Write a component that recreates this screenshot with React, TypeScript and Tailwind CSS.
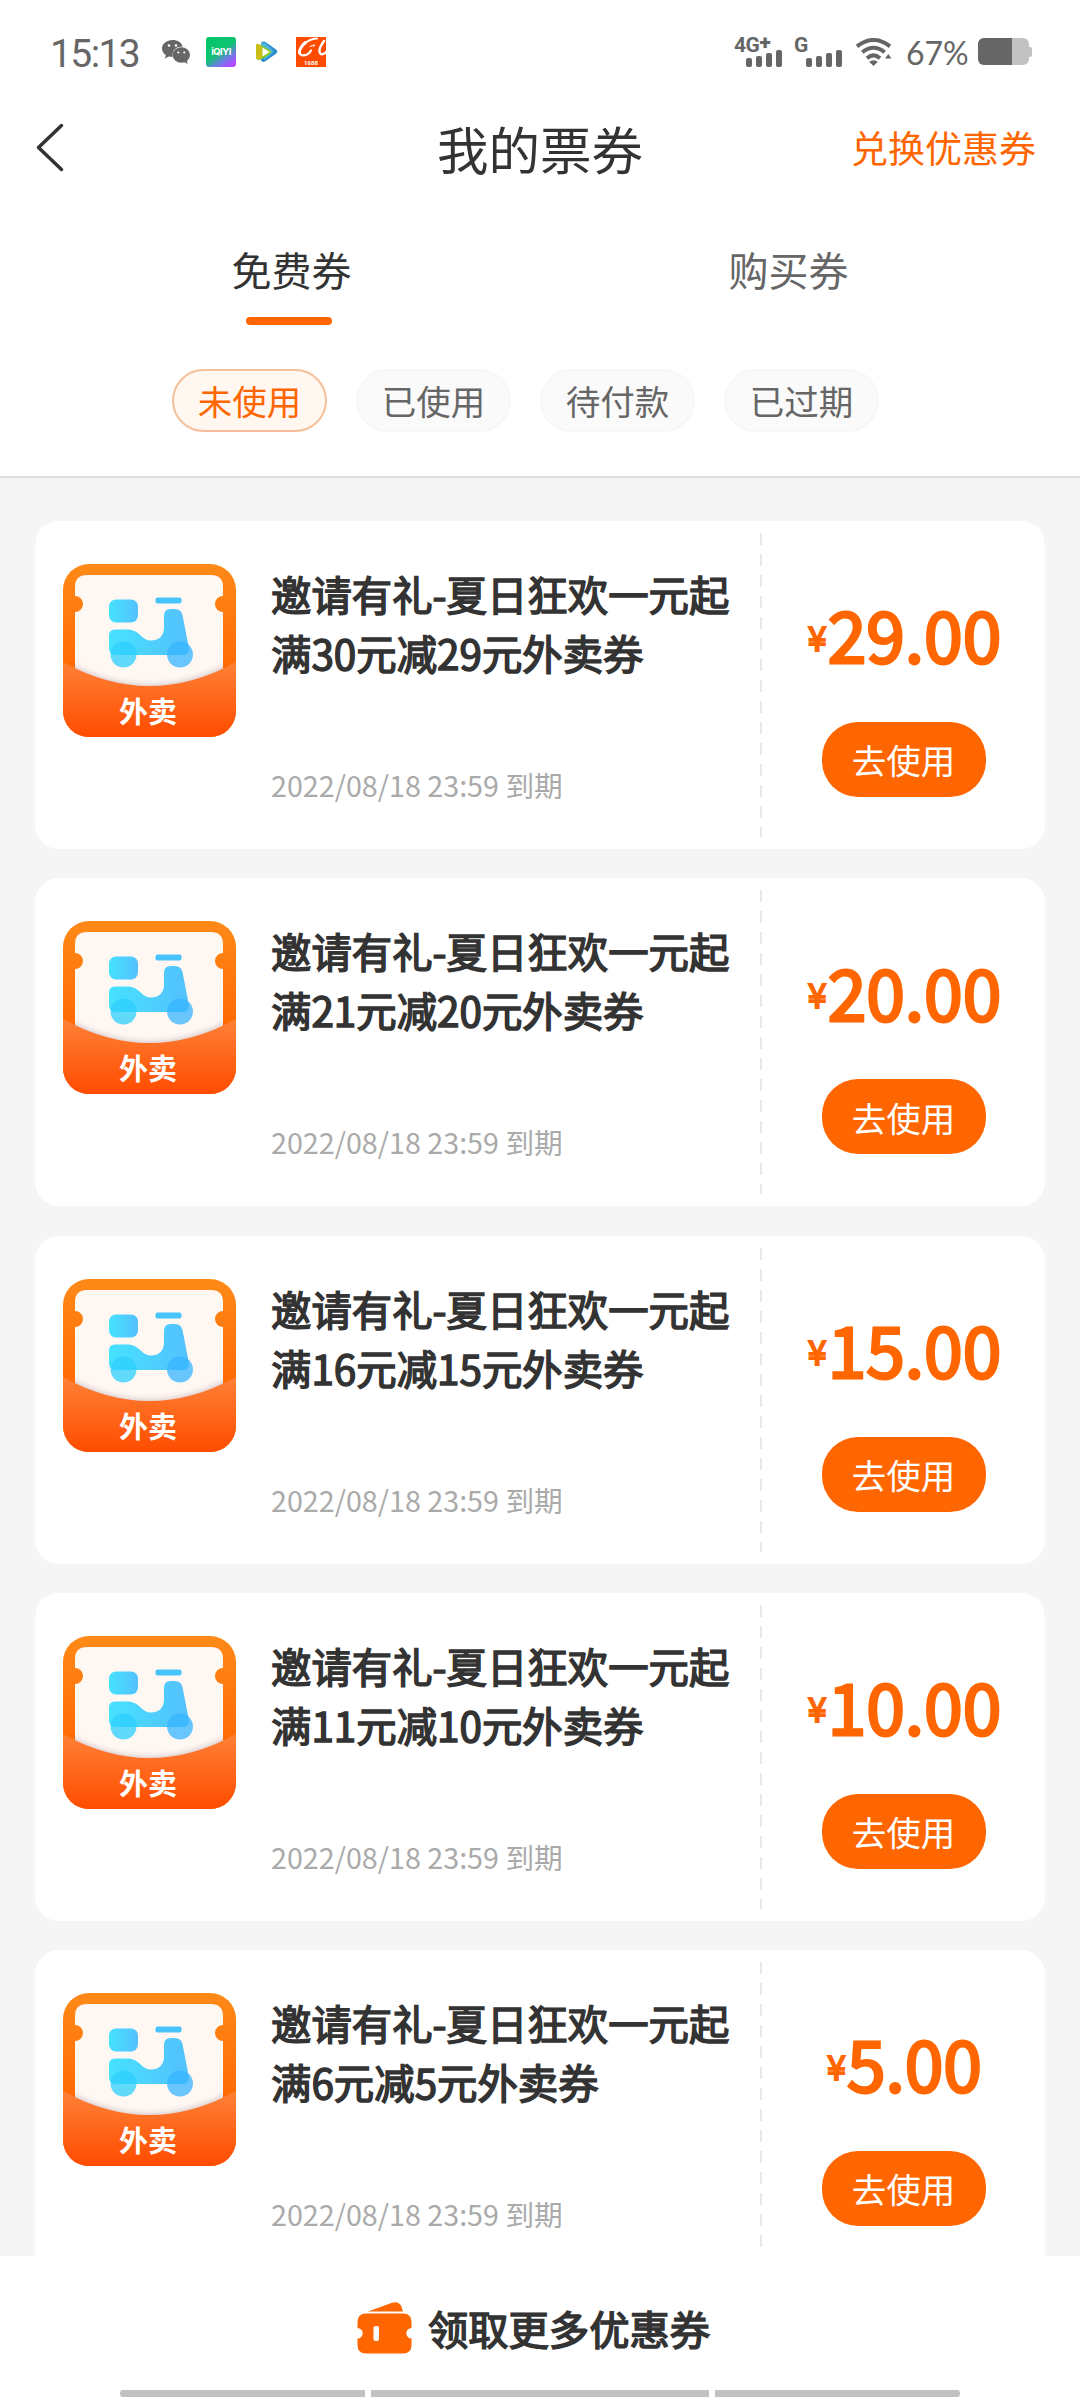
import { useState } from 'react'
import { clsx } from 'clsx'

type Coupon = {
  id: number
  full: number
  minus: number
}

const coupons: Coupon[] = [
  { id: 1, full: 30, minus: 29 },
  { id: 2, full: 21, minus: 20 },
  { id: 3, full: 16, minus: 15 },
  { id: 4, full: 11, minus: 10 },
  { id: 5, full: 6, minus: 5 },
]

const filters = ['未使用', '已使用', '待付款', '已过期']

function WeChatIcon() {
  return (
    <svg width="28" height="26" viewBox="0 0 28 26" fill="#666">
      <path d="M10.500 1C4.700 1 0 4.800 0 9.600c0 2.700 1.500 5 3.800 6.600L2.900 19.500l3.900-2c1.200.3 2.400.5 3.700.5C10 10.500 15 7.500 20.800 7.600 19.800 3.700 15.600 1 10.500 1Z" />
      <ellipse cx="19.300" cy="16" rx="8.700" ry="7.700" />
      <path d="m21.500 22.500 4 2.500-.8-4Z" />
      <g fill="#fff">
        <circle cx="7" cy="6.500" r="1.300" />
        <circle cx="14" cy="6.500" r="1.300" />
        <circle cx="16.300" cy="13.500" r="1.100" />
        <circle cx="22.300" cy="13.500" r="1.100" />
      </g>
    </svg>
  )
}

function VideoIcon() {
  return (
    <svg width="22" height="22" viewBox="0 0 22 22">
      <path d="M5 2Q6 0 9 .8L20 8.500q2.500 2 0 4.200L9 20.500q-2.500 1.200-4-1Z" fill="#2b8fd0" />
      <path d="M5 2Q7 1 9 2l7 6.500q1.500 2 0 4L8 19Z" fill="#4fb8d9" />
      <path d="M0 5q0-3 3-1.800l11 6q2 1.800 0 3.600l-9 5.700Q0 20 0 16Z" fill="#8cc916" />
      <path d="M0 5q0-3 3-1.800l3 1.600v12.700Q0 20 0 16Z" fill="#f4b81d" opacity=".6" />
      <path d="M6.500 6.500 13.500 11l-7 4.500Z" fill="#fff" />
    </svg>
  )
}

function AlibabaIcon() {
  return (
    <svg width="30" height="30" viewBox="0 0 30 30">
      <path d="M0 0h30v30H0Z" fill="#ff4b00" />
      <g fill="none" stroke="#fff" strokeLinecap="round">
        <path d="M21 1.500C13 1.500 6 8 4 13c-1.500 5 2 6.500 7 4.500 2-1 3-2 4-4" strokeWidth="2.200" />
        <path d="M9 5.500C5 9.500 3 13 3.500 16" strokeWidth="2.800" />
        <path d="M14 9.500q3-1.500 5-1.500l-2 1.500" strokeWidth="1" />
        <path d="M28 4c-3 4-5.500 9-4 12 1 2.500 4 1 6-1" strokeWidth="2.400" />
      </g>
      <text x="15" y="27.500" textAnchor="middle" fontSize="6" fontWeight="700" fill="#fff" fontFamily="Roboto, sans-serif">1688</text>
    </svg>
  )
}

function SignalBars({ label }: { label: string }) {
  return (
    <div className="relative h-[30px]">
      <span className="absolute left-0 top-0 font-[Roboto,sans-serif] text-[21px] font-bold leading-[16px] tracking-[-0.5px]">
        {label.replace('+', '')}
        {label.endsWith('+') && <b className="relative -top-[3px]">+</b>}
      </span>
      <div className="flex h-full items-end gap-[4px] pl-[12px]">
        <i className="h-[9px] w-[6px] rounded-[2px] bg-[#666]" />
        <i className="h-[11px] w-[6px] rounded-[2px] bg-[#666]" />
        <i className="h-[14px] w-[6px] rounded-[2px] bg-[#666]" />
        <i className="h-[17px] w-[6px] rounded-[2px] bg-[#666]" />
      </div>
    </div>
  )
}

function StatusBar() {
  return (
    <div className="flex h-[103px] items-center justify-between pl-[50px] pr-[48px] text-[#666]">
      <div className="flex items-center">
        <span className="w-[112px] pt-[5px] font-[Roboto,sans-serif] text-[39px] leading-none tracking-[-1.6px]">15:13</span>
        <WeChatIcon />
        <div className="ml-4 flex h-[30px] w-[30px] items-center justify-center rounded-[3px] bg-[linear-gradient(145deg,#00c566_0%,#0fc472_48%,#6a7fe0_70%,#b04cff_88%)] font-[Inter,sans-serif] text-[9.500px] font-bold leading-none tracking-[-0.5px] text-white">
          iQIYI
        </div>
        <div className="ml-5">
          <VideoIcon />
        </div>
        <div className="ml-[18px]">
          <AlibabaIcon />
        </div>
      </div>
      <div className="flex items-center">
        <SignalBars label="4G+" />
        <div className="ml-[12px]">
          <SignalBars label="G" />
        </div>
        <svg className="ml-[14px]" width="36" height="28" viewBox="0 0 36 28" fill="none" stroke="#666" strokeWidth="4">
          <path d="M1 8.300Q17.500-4.300 34 8.300" />
          <path d="M6.300 14.300q11.200-9 22.400 0" />
          <path d="M11 20.200q6.500-5.600 13 0" />
          <path d="M17.500 28l-4.300-4.200q4.300-3 8.600 0Z" fill="#666" stroke="none" />
          <path d="M29 20.500l3.300-4.500 3.200 4.500Z" fill="#666" stroke="none" />
        </svg>
        <span className="ml-[14px] w-[72px] pt-[2px] font-[Lato,sans-serif] text-[32px] leading-none">67%</span>
        <div className="flex items-center">
          <div className="flex h-[27px] w-[51px] overflow-hidden rounded-[6px] bg-[#c2c2c2]">
            <div className="w-[34px] bg-[#666]" />
          </div>
          <div className="h-[10px] w-[3px] rounded-r-[2px] bg-[#c2c2c2]" />
        </div>
      </div>
    </div>
  )
}

function TakeoutIcon() {
  return (
    <svg className="shrink-0" width="173" height="173" viewBox="0 0 173 173">
      <defs>
        <linearGradient id="back" x1="0" y1="0" x2="0" y2="1">
          <stop offset="0" stopColor="#ff8a17" />
          <stop offset=".6" stopColor="#ff6a05" />
        </linearGradient>
        <linearGradient id="pocket" x1="0" y1="0" x2="0" y2="1">
          <stop offset="0" stopColor="#ff8136" />
          <stop offset="1" stopColor="#ff4c00" />
        </linearGradient>
        <linearGradient id="bike" x1="0" y1="0" x2="1" y2="0">
          <stop offset="0" stopColor="#46e2ff" />
          <stop offset="1" stopColor="#54c0fd" />
        </linearGradient>
        <clipPath id="tile">
          <rect width="173" height="173" rx="26" />
        </clipPath>
        <filter id="soft" x="-10%" y="-10%" width="120%" height="120%">
          <feGaussianBlur stdDeviation="3" />
        </filter>
        <clipPath id="ticket">
          <path d="M24 11H148Q160 11 160 23V32a8 8 0 0 0 0 16V130H12V48a8 8 0 0 0 0-16V23Q12 11 24 11Z" />
        </clipPath>
      </defs>
      <g clipPath="url(#tile)">
        <path d="M0 0H173V173H0Z" fill="url(#back)" />
        <g clipPath="url(#ticket)">
          <path d="M0 0H173V173H0Z" fill="#fff7f2" />
          <path d="M0 97Q86.500 146 173 97V173H0Z" fill="#a08a98" opacity=".55" filter="url(#soft)" />
        </g>
        <path d="M0 98Q86.500 146 173 98V173H0Z" fill="url(#pocket)" />
      </g>
      <rect x="46" y="35.500" width="29" height="23" rx="7" fill="url(#bike)" />
      <rect x="92.500" y="33.500" width="26" height="6" rx="2" fill="#48c4fd" />
      <path d="M52 65.500H64C77 65.500 78 76.500 88 76.500 97 76.500 101 71 101 63V52Q101 45 107.500 45H112Q118 45 119.500 51L125.500 82Q127 91 120 91H53Q46 91 46 84V71.500Q46 65.500 52 65.500Z" fill="url(#bike)" />
      <circle cx="60.500" cy="90.500" r="13" fill="#2ccffd" opacity=".75" />
      <circle cx="117" cy="90.500" r="13" fill="#36b6ff" opacity=".75" />
      <text x="85" y="159" textAnchor="middle" fontSize="29" fontWeight="700" fill="#fff" fontFamily="'Noto Sans CJK SC', sans-serif">外卖</text>
    </svg>
  )
}

function CouponCard({ coupon }: { coupon: Coupon }) {
  return (
    <div className="flex h-[328px] shrink-0 rounded-[24px] bg-white">
      <div className="flex w-[725px] pl-[28px] pt-[43px]">
        <TakeoutIcon />
        <div className="ml-[35px] whitespace-nowrap">
          <h2 className="text-[40.400px] leading-[59px] text-[#333] [-webkit-text-stroke:1.500px_#333]">
            邀请有礼-夏日狂欢一元起
            <br />
            满{coupon.full}元减{coupon.minus}元外卖券
          </h2>
          <p className="mt-[83px] text-[28.700px] leading-[40px] text-[#aaa]">2022/08/18 23:59 到期</p>
        </div>
      </div>
      <div className="my-[12px] w-[2px] bg-[repeating-linear-gradient(to_bottom,#e8e8e8_0_12px,transparent_12px_21px)]" />
      <div className="flex flex-1 flex-col items-center pt-[62px] text-[#ff6600]">
        <div className="flex h-[100px] items-center pl-[2px]">
          <span className="pr-px pt-[6px] text-[34px] [-webkit-text-stroke:1.800px_#ff6600]">¥</span>
          <span className="text-[69.500px] leading-none [-webkit-text-stroke:2.800px_#ff6600]">{coupon.minus.toFixed(2)}</span>
        </div>
        <button className="mt-[39px] h-[75px] w-[164px] rounded-[36px] bg-[#ff6600] text-[34.500px] leading-none text-white">
          去使用
        </button>
      </div>
    </div>
  )
}

export default function App() {
  const [filter, setFilter] = useState('未使用')

  return (
    <div className="flex h-[2400px] w-[1080px] flex-col overflow-hidden bg-[#f5f5f5] font-['Noto_Sans_CJK_SC',sans-serif] text-[#333]">
      <header className="h-[478px] shrink-0 border-b-2 border-[#ddd] bg-white">
        <StatusBar />

        {/* Title */}
        <div className="grid h-[89px] grid-cols-3 items-center pl-[36px] pr-[36px]">
          <svg width="28" height="49" viewBox="0 0 28 49" fill="none" stroke="#333" strokeWidth="3.500" strokeLinecap="round" strokeLinejoin="round">
            <path d="M25.500 2.500 2.500 24.500 25.500 46.500" />
          </svg>
          <h1 className="text-center text-[51.500px] leading-none">我的票券</h1>
          <span className="pr-[8px] text-right text-[37px] leading-none text-[#ff6600]">兑换优惠券</span>
        </div>

        {/* Tabs */}
        <div className="flex justify-center pt-[49px] text-[40px] leading-[56px]">
          <button className="flex w-[497px] flex-col items-center">
            免费券
            <span className="mt-[20px] mr-[6px] h-[8px] w-[86px] rounded-full bg-[#ff6600]" />
          </button>
          <button className="flex w-[497px] flex-col items-center text-[#666]">购买券</button>
        </div>

        {/* Filters */}
        <div className="mt-[44px] flex gap-[29px] pl-[172px]">
          {filters.map((name) => (
            <button
              key={name}
              onClick={() => setFilter(name)}
              className={clsx(
                'h-[63px] w-[155px] rounded-full border-2 text-[34.500px] leading-none',
                filter === name
                  ? 'border-[#f4c09a] bg-[#fff7f0] text-[#ff6600]'
                  : 'border-[#f7f7f7] bg-[#fafafa] text-[#666]'
              )}
            >
              {name}
            </button>
          ))}
        </div>
      </header>

      <main className="flex h-[1778px] shrink-0 flex-col gap-[29.250px] overflow-hidden px-[35px] pt-[43px]">
        {coupons.map((coupon) => (
          <CouponCard key={coupon.id} coupon={coupon} />
        ))}
      </main>

      <footer className="flex flex-1 flex-col bg-white">
        <div className="flex h-[134px] items-center justify-center pt-[10px] pr-[13px]">
          <svg width="55" height="52" viewBox="0 0 55 52" fill="#ff6600">
            <path d="M11 9.500 35 .8q7-2.300 9.500 4l1.500 4.700Z" />
            <path d="M9 11.500H46q8.500 0 8.500 8.500v6a5.200 5.200 0 0 0 0 10.400V43q0 8.500-8.500 8.500H9Q.5 51.500.5 43V36.400a5.200 5.200 0 0 0 0-10.400V20Q.5 11.500 9 11.500Z" />
            <rect x="16.500" y="24" width="5.500" height="15" rx="2" fill="#fff" />
          </svg>
          <span className="ml-[16px] text-[40.3px] leading-none [-webkit-text-stroke:1.500px_#333]">领取更多优惠券</span>
        </div>
        <div className="flex justify-center gap-[6px]">
          <i className="h-[7px] w-[245px] rounded-l-[3px] bg-[#c2c2c2]" />
          <i className="h-[7px] w-[338px] bg-[#c2c2c2]" />
          <i className="h-[7px] w-[245px] rounded-r-[3px] bg-[#c2c2c2]" />
        </div>
      </footer>
    </div>
  )
}
